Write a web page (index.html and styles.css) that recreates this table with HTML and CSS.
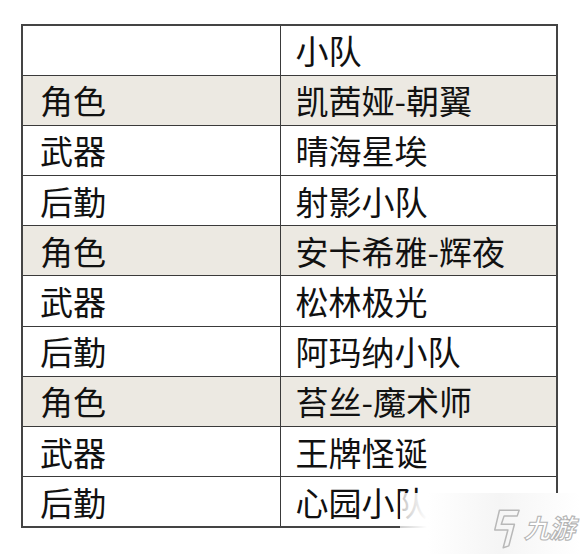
FILE: index.html
```html
<!DOCTYPE html>
<html lang="zh">
<head>
<meta charset="utf-8">
<link rel="stylesheet" href="styles.css">
</head>
<body>
<div class="page">
  <table class="team">
    <colgroup><col class="c1"><col class="c2"></colgroup>
    <tr><td></td><td>小队</td></tr>
    <tr class="shade"><td>角色</td><td>凯茜娅-朝翼</td></tr>
    <tr><td>武器</td><td>晴海星埃</td></tr>
    <tr><td>后勤</td><td>射影小队</td></tr>
    <tr class="shade"><td>角色</td><td>安卡希雅-辉夜</td></tr>
    <tr><td>武器</td><td>松林极光</td></tr>
    <tr><td>后勤</td><td>阿玛纳小队</td></tr>
    <tr class="shade"><td>角色</td><td>苔丝-魔术师</td></tr>
    <tr><td>武器</td><td>王牌怪诞</td></tr>
    <tr><td>后勤</td><td>心园小队</td></tr>
  </table>
  <div class="watermark">
    <svg class="logo" viewBox="0 0 32 46" width="30" height="44">
      <path d="M9 3 H30 L28 9 H14 L11 18 H25 L19 41 L13 43 L18 24 H4 Z" fill="none" stroke="#b8b8b8" stroke-width="1.6" stroke-linejoin="round"/>
    </svg>
    <span class="brand">九游</span>
  </div>
</div>
</body>
</html>
```
FILE: styles.css
```css
html, body {
  margin: 0;
  padding: 0;
  background: #ffffff;
}
.page {
  position: relative;
  width: 580px;
  height: 554px;
  padding: 24px 0 0 21px;
  box-sizing: border-box;
  overflow: hidden;
}
.team {
  border-collapse: collapse;
  width: 537px;
  border: 2px solid #444444;
  font-family: "Noto Sans CJK SC", "Noto Sans CJK JP", sans-serif;
  font-size: 33px;
  color: #111111;
}
.c1 { width: 258px; }
.team td {
  border: 1px solid #3a3a3a;
  height: 50.2px;
  padding: 0 0 0 15px;
  line-height: 48px;
  box-sizing: border-box;
  white-space: nowrap;
}
.team td:first-child { padding-left: 17px; }
.team tr.shade td { background: #ece9e2; }
.watermark {
  position: absolute;
  left: 400px;
  top: 493px;
  width: 180px;
  height: 61px;
  background: linear-gradient(to right, rgba(255,255,255,0.75), #ffffff 15%, #f5f5f5 55%, #ffffff);
  display: flex;
  align-items: center;
  justify-content: flex-end;
  gap: 3px;
  padding-right: 6px;
  box-sizing: border-box;
}
.logo { display: block; margin-top: 10px; }
.brand {
  font-family: "Noto Sans CJK SC", sans-serif;
  font-size: 26px;
  font-style: italic;
  font-weight: 700;
  color: #ffffff;
  -webkit-text-stroke: 1.1px #b5b5b5;
  letter-spacing: -1px;
  margin-top: 6px;
  white-space: nowrap;
}
```
